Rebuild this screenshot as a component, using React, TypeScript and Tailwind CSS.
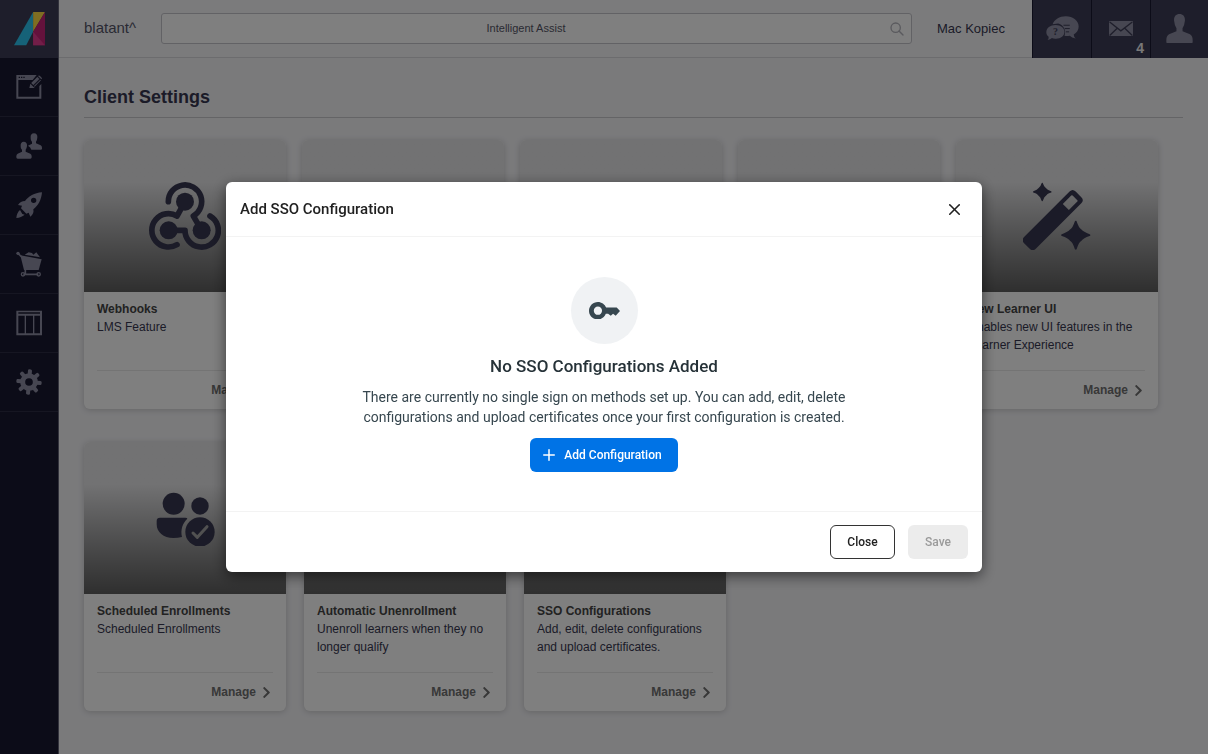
import { ReactNode } from "react";
import { FiPlus, FiX } from "react-icons/fi";
import { FaChevronRight } from "react-icons/fa";

type Feature = {
  title?: string;
  text?: string;
  icon: ReactNode;
};

function WebhookIcon() {
  return (
    <svg viewBox="232 155 216 206" className="w-[72px]" fill="none" stroke="currentColor" strokeWidth="17" strokeLinecap="round" strokeLinejoin="round">
      <path d="M290 214A50 50 0 1 1 365 257L390 300" />
      <path d="M316 343A50 50 0 1 1 316 257L340 214" />
      <path d="M415 257A50 50 0 1 1 340 300H291" />
      <g fill="currentColor" stroke="none">
        <circle cx="340" cy="214" r="27" />
        <circle cx="291" cy="300" r="27" />
        <circle cx="390" cy="300" r="27" />
      </g>
    </svg>
  );
}

function WandIcon() {
  return (
    <svg viewBox="250 155 205 206" className="w-[68px]" fill="currentColor">
      <path
        transform="translate(339.5 270) rotate(-45)"
        fillRule="evenodd"
        d="M-97-25H97Q110-25 110-12V12Q110 25 97 25H-97Q-110 25-110 12V-12Q-110-25-97-25ZM56-13V13H92Q95 13 95 10V-10Q95-13 92-13Z"
      />
      <path strokeLinejoin="round" stroke="currentColor" strokeWidth="4" d="M308 159Q312 172 318 175Q321 181 334 185Q321 189 318 195Q312 198 308 211Q304 198 298 195Q295 189 282 185Q295 181 298 175Q304 172 308 159Z" />
      <path strokeLinejoin="round" stroke="currentColor" strokeWidth="6" d="M409 275Q416 296 424 300Q430 308 450 315Q430 322 424 330Q416 334 409 356Q402 334 394 330Q388 322 368 315Q388 308 394 300Q402 296 409 275Z" />
    </svg>
  );
}

function EnrollIcon() {
  return (
    <svg viewBox="253 181 180 170" className="w-[60px]" fill="currentColor">
      <circle cx="309" cy="222" r="33" />
      <circle cx="388" cy="229" r="26" />
      <path d="M268 264H344Q350 264 350 267C336 280 329 300 334 322Q322 325 308 325C278 325 258 308 258 284V274Q258 264 268 264Z" />
      <circle cx="388" cy="307" r="44" />
      <path d="M367 310L380 323L409 291" fill="none" stroke="#a3a3a3" strokeWidth="9" strokeLinecap="round" strokeLinejoin="round" />
    </svg>
  );
}

function BlockIcon() {
  return (
    <svg viewBox="0 0 68 68" className="w-[68px]" fill="none" stroke="currentColor" strokeWidth="6">
      <rect x="3" y="6" width="62" height="56" rx="6" />
    </svg>
  );
}

const topFeatures: Feature[] = [
  { title: "Webhooks", text: "LMS Feature", icon: <WebhookIcon /> },
  { icon: <BlockIcon /> },
  { icon: <BlockIcon /> },
  { icon: <BlockIcon /> },
  {
    title: "New Learner UI",
    text: "Enables new UI features in the Learner Experience",
    icon: <WandIcon />,
  },
];

const bottomFeatures: Feature[] = [
  {
    title: "Scheduled Enrollments",
    text: "Scheduled Enrollments",
    icon: <EnrollIcon />,
  },
  {
    title: "Automatic Unenrollment",
    text: "Unenroll learners when they no longer qualify",
    icon: <BlockIcon />,
  },
  {
    title: "SSO Configurations",
    text: "Add, edit, delete configurations and upload certificates.",
    icon: <BlockIcon />,
  },
];

// Sidebar glyphs share one 78 unit box
const navItems: { label: string; icon: ReactNode }[] = [
  {
    label: "Editor",
    icon: (
      <>
        <path fillRule="evenodd" d="M1 3H62L50 18H7V68H70V36L76 30V74H1ZM8 8V12H12V8ZM15 8V12H19V8ZM22 8V12H26V8Z" />
        <path d="M40 42L43 29L56 42Z" />
        <path d="M45 27L64 8L71 15L52 34Z" stroke="#181830" strokeWidth="1" />
        <path d="M54 36L73 17L75 19L56 38Z" />
        <path d="M66 6Q69 3 72 6L77 11Q79 14 76 16Z" />
      </>
    ),
  },
  {
    label: "Users",
    icon: (
      <>
        <path d="M54 1C61 1 65 6 64 14C63 20 62 23 60 26V31L74 37Q78 39 78 44V47Q78 50 74 50H46Q44 42 36 38L48 32V26C45 23 44 19 44 14C43 6 47 1 54 1Z" />
        <path d="M23 26C30 26 34 31 33 39C32 45 31 48 29 50V56L43 62Q47 64 47 70V73Q47 77 43 77H5Q1 77 1 73V70Q1 64 5 62L18 56V50C15 48 14 44 14 39C13 31 17 26 23 26Z" />
      </>
    ),
  },
  {
    label: "Launch",
    icon: (
      <>
        <path fillRule="evenodd" d="M78 1C55 3 38 13 27 27C18 27 11 31 6 39L18 41L15 49L31 65L38 62L43 74C51 68 54 61 52 52C67 40 76 24 78 1ZM53 17A8 8 0 1 1 53 33A8 8 0 1 1 53 17Z" />
        <path d="M12 54C5 60 2 68 1 78C11 77 19 74 26 68L19 66Z" />
      </>
    ),
  },
  {
    label: "Shop",
    icon: (
      <>
        <circle cx="6" cy="7" r="5" />
        <path d="M6 7L16 17" stroke="currentColor" strokeWidth="5" />
        <path d="M13 13L77 25L68 57H24Z" />
        <path d="M26 11L38 4L48 6L52 11L61 4L72 19L50 15Z" />
        <path d="M28 56V69M22 70H67" stroke="currentColor" strokeWidth="5" />
        <circle cx="21" cy="70" r="5" fill="none" stroke="currentColor" strokeWidth="4" />
        <circle cx="68" cy="70" r="5" fill="none" stroke="currentColor" strokeWidth="4" />
      </>
    ),
  },
  {
    label: "Layout",
    icon: (
      <path fillRule="evenodd" d="M1 2H78V76H1ZM7 7V11H72V7ZM7 17V70H26V17ZM30 17V70H51V17ZM55 17V70H72V17Z" />
    ),
  },
  {
    label: "Settings",
    icon: (
      <>
        <circle cx="39" cy="39" r="19" fill="none" stroke="currentColor" strokeWidth="15" />
        {[5, 50, 95, 140, 185, 230, 275, 320].map((value) => (
          <rect key={value} x="33" y="1" width="12" height="18" rx="4" transform={`rotate(${value} 39 39)`} />
        ))}
      </>
    ),
  },
];

function Card({ title, text, icon }: Feature) {
  return (
    <div className="flex h-[269px] w-[202px] flex-col rounded-md bg-white shadow-[0_1px_6px_rgba(0,0,0,0.18)]">
      <div className="flex h-[152px] items-center justify-center rounded-t-md bg-linear-to-b from-[#e4e4e6] from-28% to-[#5e5e5e] text-[#373750]">
        {icon}
      </div>
      {title && (
        <>
          <div className="flex-1 px-[13px] pt-2 text-xs leading-[18px]">
            <h3 className="font-bold text-[#444]">{title}</h3>
            <p className="text-[#373750]">{text}</p>
          </div>
          <div className="mx-[13px] flex h-[39px] items-center justify-end border-t border-[#e8e8e8]">
            <a href="#" className="flex items-center gap-1 text-xs font-bold text-[#707070]">
              Manage <FaChevronRight fontSize={13} />
            </a>
          </div>
        </>
      )}
    </div>
  );
}

function Sidebar() {
  return (
    <nav className="w-[59px] shrink-0 border-r border-[#66667a] bg-[#181830]">
      <a href="#" aria-label="Home" className="flex h-[58px] items-center justify-center bg-[#3d3d56]">
        <svg viewBox="0 0 94 101" className="w-[31px]">
          <path d="M58 0V60L37 101H0Z" fill="#2cc4f0" />
          <path d="M58 0H94L58 60Z" fill="#ffdc44" />
          <path d="M94 0V101H58V60Z" fill="#c82478" />
          <path d="M58 60L94 101H58Z" fill="#e43c90" />
        </svg>
      </a>
      {navItems.map((value) => (
        <a
          key={value.label}
          href="#"
          aria-label={value.label}
          className="flex h-[59px] items-center justify-center border-b border-[#2c2c44] text-[#8e8ea4]"
        >
          <svg viewBox="0 0 78 78" className="w-[26px]" fill="currentColor">
            {value.icon}
          </svg>
        </a>
      ))}
    </nav>
  );
}

function Header() {
  return (
    <header className="flex h-[58px] items-center border-b border-[#d8d8dc] bg-[#f6f6f9] pl-[25px] text-[#373750]">
      <span className="w-[77px] text-[15px] text-[#555568]">blatant^</span>
      <label className="flex h-[31px] flex-1 items-center rounded-[3px] border border-[#c4c4ca] bg-white pr-[7px]">
        <input
          type="text"
          aria-label="Search"
          placeholder="Intelligent Assist"
          className="min-w-0 flex-1 text-center text-[11px] outline-none placeholder:text-[#555566]"
        />
        <svg viewBox="0 0 42 42" className="w-[14px]" fill="none" stroke="#b4b4bc" strokeWidth="4" strokeLinecap="round">
          <circle cx="17" cy="17" r="14" />
          <path d="M27 27L39 39" />
        </svg>
      </label>
      <span className="w-[120px] pl-[25px] text-[13px]">Mac Kopiec</span>
      <div className="flex h-[58px] bg-[#3d3d56] text-[#8e8ea4]">
        <button aria-label="Messages" className="flex w-[59px] items-center justify-center border-l border-[#181830]">
          <svg viewBox="0 0 100 75" className="w-[33px]" fill="currentColor">
            <path d="M60 1C82 1 99 14 99 32C99 43 93 51 84 56Q84 63 90 68Q78 67 72 60C66 61 60 61 56 60C62 46 54 27 37 23L20 25C25 11 41 1 60 1Z" />
            <path d="M29 27C45 27 56 36 56 48C56 61 44 70 28 69C24 69 21 68 18 67Q13 72 5 73Q9 69 8 63C3 59 1 55 1 49C1 36 13 27 29 27Z" />
            <path d="M53 28H72M57 38H72M60 48H70" stroke="#3d3d56" strokeWidth="3" />
            <text x="21" y="59" fontSize="30" fontWeight="bold" fontFamily="Liberation Serif, serif" fill="#3d3d56">?</text>
          </svg>
        </button>
        <button aria-label="Mail" className="relative flex w-[59px] items-center justify-center border-l border-[#181830]">
          <svg viewBox="0 0 73 46" className="w-6">
            <rect width="73" height="46" rx="3" fill="currentColor" />
            <path d="M2 3L36 30L71 3M2 44L25 22M71 44L48 22" fill="none" stroke="#3d3d56" strokeWidth="4" />
          </svg>
          <span className="absolute right-[6px] bottom-[2px] text-sm leading-4 font-bold text-[#f0f0f0]">4</span>
        </button>
        <button aria-label="Profile" className="flex w-[58px] items-center justify-center border-l border-[#181830]">
          <svg viewBox="0 0 80 88" className="w-[27px]" fill="currentColor">
            <path d="M40 0C51 0 57 8 56 20Q55 33 49 42V51L71 60Q79 65 79 77V82Q79 88 73 88H7Q1 88 1 82V77Q1 65 9 60L31 51V42Q25 33 24 20C23 8 29 0 40 0Z" />
          </svg>
        </button>
      </div>
    </header>
  );
}

function SsoDialog() {
  return (
    <div className="fixed inset-0 flex items-center justify-center bg-black/50 font-[Roboto,sans-serif]">
      <div
        role="dialog"
        aria-labelledby="sso-title"
        className="w-full max-w-[756px] rounded-md bg-white shadow-[0_4px_14px_rgba(0,0,0,0.55)]"
      >
        <div className="flex h-[55px] items-center justify-between border-b border-[#f3f3f3] px-[14px]">
          <h2 id="sso-title" className="text-[15px] font-medium text-[#212121]">
            Add SSO Configuration
          </h2>
          <button aria-label="Close dialog" className="px-1 text-[#212121]">
            <FiX fontSize={19} />
          </button>
        </div>
        <div className="flex flex-col items-center px-8 pt-10 pb-[39px] text-center">
          <div className="flex size-[67px] items-center justify-center rounded-full bg-[#f0f2f4]">
            <svg viewBox="0 0 94 53" className="w-[31px]" fill="#37474f">
              <path fillRule="evenodd" d="M27 0C38 0 48 7 52 17H84L94 27L81 42L73 36L66 42L58 36H51C47 46 38 53 27 53C12 53 0 41 0 27C0 12 12 0 27 0ZM27 14A12 12 0 1 0 27 39A12 12 0 1 0 27 14Z" />
            </svg>
          </div>
          <h3 className="mt-3 text-[17px] leading-5 font-medium text-[#263238]">
            No SSO Configurations Added
          </h3>
          <p className="mt-[11px] max-w-[490px] text-sm leading-5 text-[#37474f]">
            There are currently no single sign on methods set up. You can add, edit, delete
            configurations and upload certificates once your first configuration is created.
          </p>
          <button className="mt-[11px] flex h-[34px] items-center gap-[6px] rounded-md bg-[#0073e6] pr-4 pl-[10px] text-xs font-medium text-white">
            <FiPlus fontSize={18} /> Add Configuration
          </button>
        </div>
        <div className="flex h-[61px] items-center justify-end gap-[13px] border-t border-[#f3f3f3] px-[14px]">
          <button className="h-[34px] w-[65px] rounded-md border border-[#333] text-xs font-medium text-[#212121]">
            Close
          </button>
          <button disabled className="h-[34px] w-[60px] rounded-md bg-[#ececec] text-xs font-medium text-[#9a9a9a]">
            Save
          </button>
        </div>
      </div>
    </div>
  );
}

export default function App() {
  return (
    <div className="flex min-h-screen bg-[#f4f4f7] font-['Liberation_Sans',Arial,sans-serif]">
      <Sidebar />
      <div className="min-w-0 flex-1">
        <Header />
        <main className="px-[25px] pt-[25px]">
          <h1 className="border-b border-[#c8c8cc] pb-[6px] text-lg font-bold text-[#373750]">
            Client Settings
          </h1>
          {/* Feature cards */}
          <div className="mt-[22px] flex flex-wrap gap-4">
            {topFeatures.map((value, index) => (
              <Card key={index} {...value} />
            ))}
          </div>
          <div className="mt-[33px] flex flex-wrap gap-[18px]">
            {bottomFeatures.map((value) => (
              <Card key={value.title} {...value} />
            ))}
          </div>
        </main>
      </div>
      <SsoDialog />
    </div>
  );
}
